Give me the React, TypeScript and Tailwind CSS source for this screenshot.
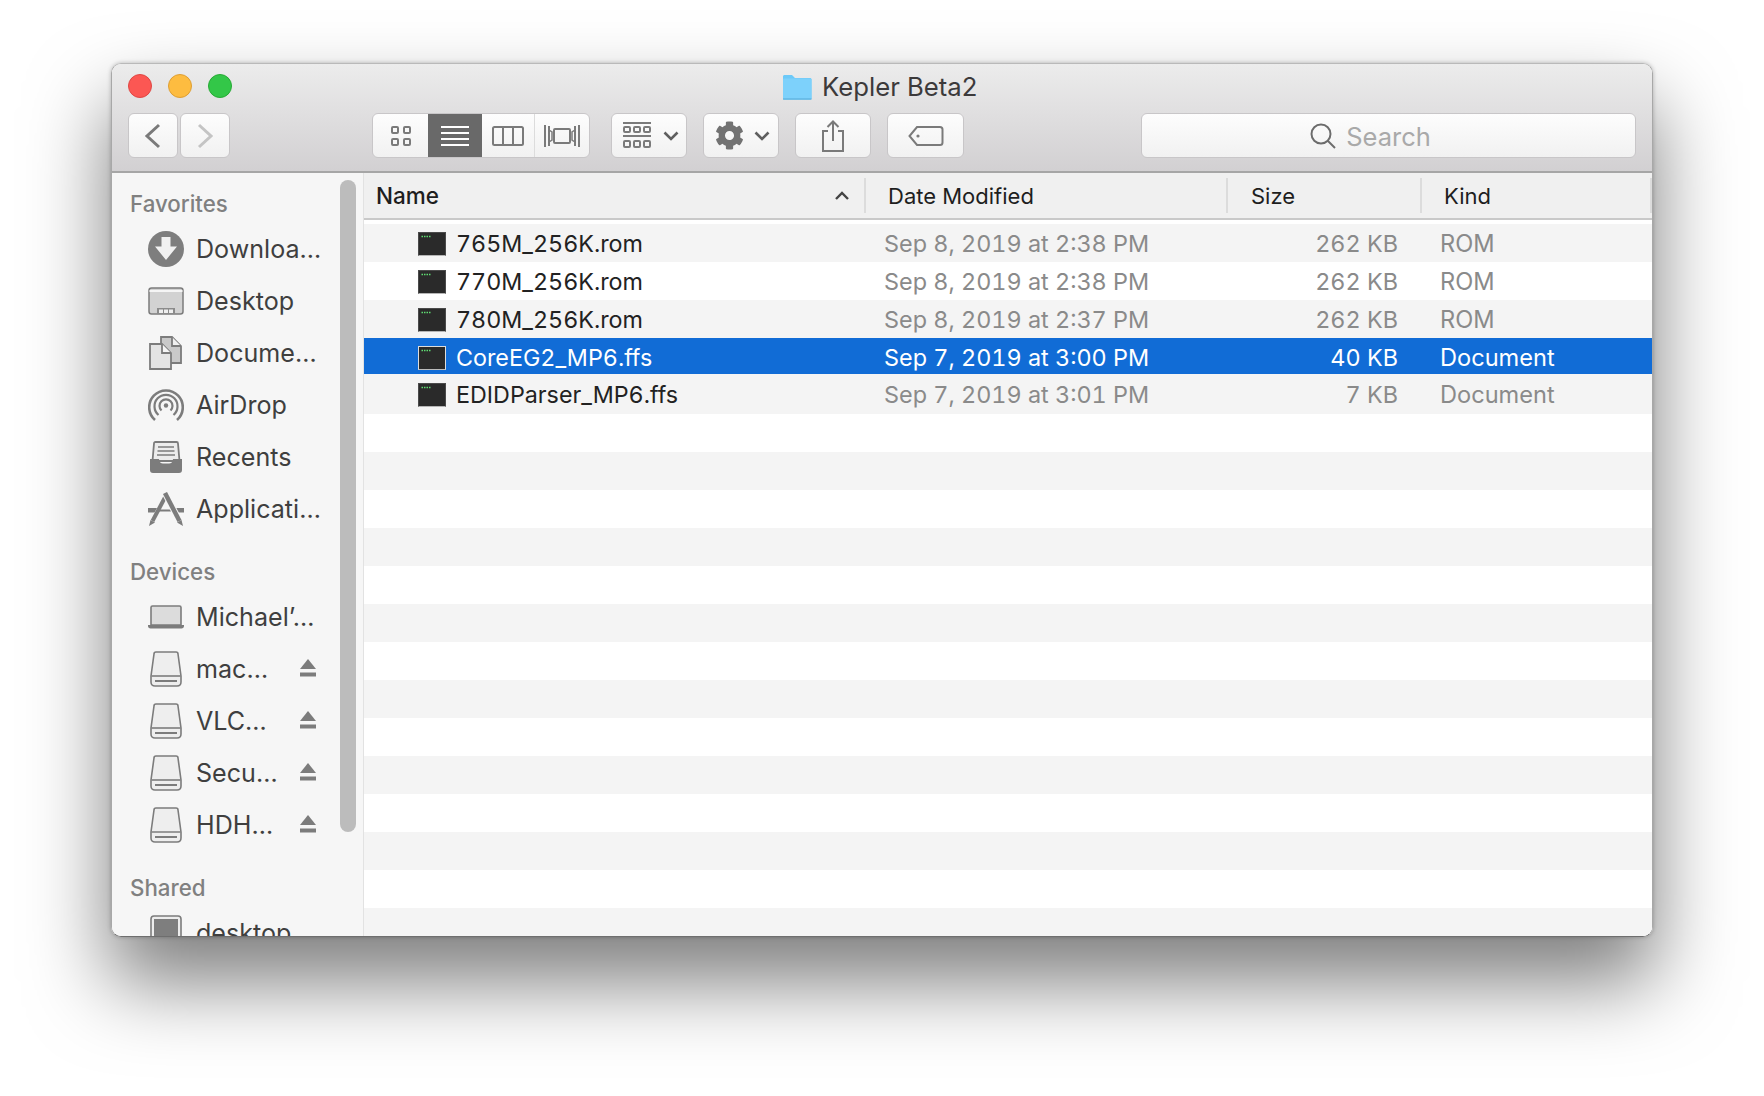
import { FaCog } from "react-icons/fa";

const IC = "#7c7c7c";

function Chevron({ dir, color }: { dir: "l" | "r"; color: string }) {
  return (
    <svg width="20" height="26" viewBox="0 0 20 26" fill="none">
      <path d={dir === "l" ? "M16 2 L4 13 L16 24" : "M4 2 L16 13 L4 24"} stroke={color} strokeWidth="3" />
    </svg>
  );
}

function SmallChevron() {
  return (
    <svg width="16" height="10" viewBox="0 0 16 10" fill="none">
      <path d="M1.5 1.5 L8 8 L14.5 1.5" stroke="#5f5f5f" strokeWidth="2.6" />
    </svg>
  );
}

function GridIcon() {
  return (
    <svg width="20" height="22" viewBox="0 0 20 22" fill="none" stroke="#7a7a7a" strokeWidth="2">
      <rect x="1" y="2" width="6" height="6" rx="1" />
      <rect x="13" y="2" width="6" height="6" rx="1" />
      <rect x="1" y="14" width="6" height="6" rx="1" />
      <rect x="13" y="14" width="6" height="6" rx="1" />
    </svg>
  );
}

function ListIcon() {
  return (
    <svg width="28" height="22" viewBox="0 0 28 22" fill="none" stroke="#fff" strokeWidth="2">
      <path d="M0 2H28M0 8H28M0 14H28M0 20H28" />
    </svg>
  );
}

function ColumnsIcon() {
  return (
    <svg width="32" height="20" viewBox="0 0 32 20" fill="none" stroke="#7a7a7a" strokeWidth="2">
      <rect x="1" y="1" width="30" height="18" rx="1.5" />
      <path d="M11 1V19M21 1V19" />
    </svg>
  );
}

function CoverIcon() {
  return (
    <svg width="36" height="22" viewBox="0 0 36 22" fill="none" stroke="#7a7a7a" strokeWidth="2">
      <path d="M1 0V22M5 1V21M35 0V22M31 1V21" />
      <rect x="10" y="4" width="16" height="14" rx="1" />
      <path d="M5 5L8 7V15L5 17M31 5L28 7V15L31 17" strokeWidth="1.5" />
    </svg>
  );
}

function GroupIcon() {
  return (
    <svg width="28" height="28" viewBox="0 0 28 28" fill="none" stroke="#7a7a7a" strokeWidth="2">
      <path d="M0 1H28M0 14H28" />
      <rect x="1" y="5" width="6" height="5" rx="1" />
      <rect x="11" y="5" width="6" height="5" rx="1" />
      <rect x="21" y="5" width="6" height="5" rx="1" />
      <rect x="1" y="19" width="6" height="6" rx="1" />
      <rect x="11" y="19" width="6" height="6" rx="1" />
      <rect x="21" y="19" width="6" height="6" rx="1" />
    </svg>
  );
}

function ShareIcon() {
  return (
    <svg width="24" height="32" viewBox="0 0 24 32" fill="none" stroke="#7a7a7a" strokeWidth="2">
      <path d="M7 11H2V31H22V11H17" />
      <path d="M12 21V2M6.5 7L12 1.5L17.5 7" />
    </svg>
  );
}

function TagIcon() {
  return (
    <svg width="36" height="22" viewBox="0 0 36 22" fill="none" stroke="#7a7a7a" strokeWidth="2">
      <path d="M9 2H32A2.5 2.5 0 0 1 34.500 4.500V17.500A2.500 2.500 0 0 1 32 20H9L1.500 11Z" />
      <circle cx="10" cy="11" r="1.600" fill="#7a7a7a" stroke="none" />
    </svg>
  );
}

function SearchIcon() {
  return (
    <svg width="26" height="26" viewBox="0 0 26 26" fill="none" stroke="#6c6c6c" strokeWidth="2">
      <circle cx="11" cy="11" r="9.500" />
      <path d="M17.500 17.500L25 25" />
    </svg>
  );
}

function FolderIcon() {
  return (
    <svg width="30" height="26" viewBox="0 0 30 26">
      <path d="M1 2.500C1 1.500 1.800 1 2.500 1H10L13 4H28C29 4 29.500 4.700 29.500 5.500V24C29.500 25 29 25.500 28 25.500H2.500C1.500 25.500 1 25 1 24Z" fill="#6cc9f8" />
      <rect x="1" y="4.500" width="28.500" height="21" rx="1" fill="#7dd1fb" />
      <rect x="1" y="24.500" width="28.500" height="1" fill="#54a9d8" />
    </svg>
  );
}

function Download() {
  return (
    <svg width="36" height="36" viewBox="0 0 36 36">
      <circle cx="18" cy="18" r="18" fill="#7e7e7e" />
      <path d="M13.500 6H22.500V15.500H29L18 29L7 15.500H13.500Z" fill="#f1f1f1" />
    </svg>
  );
}

function Desktop() {
  return (
    <svg width="36" height="28" viewBox="0 0 36 28">
      <rect x="1" y="1" width="34" height="26" rx="2.500" fill="#d2d2d2" stroke={IC} strokeWidth="1.500" />
      <rect x="1.500" y="3" width="33" height="2" fill="#f5f5f5" />
      <rect x="9" y="21" width="18" height="6" fill="#8b8b8b" />
      <rect x="11" y="22.500" width="4" height="3.500" fill="#efefef" />
      <rect x="16" y="22.500" width="4" height="3.500" fill="#efefef" />
      <rect x="21" y="22.500" width="4" height="3.500" fill="#efefef" />
    </svg>
  );
}

function Documents() {
  return (
    <svg width="34" height="34" viewBox="0 0 34 34" stroke={IC} strokeWidth="1.800">
      <path d="M12 1H23L32 10V27H12Z" fill="#c9c9c9" />
      <path d="M23 1V10H32" fill="#f0f0f0" />
      <path d="M1 8H13L22 17V33H1Z" fill="#e4e4e4" />
      <path d="M13 8V17H22" fill="#f5f5f5" />
    </svg>
  );
}

function AirDrop() {
  return (
    <svg width="36" height="34" viewBox="0 0 36 34" fill="none" stroke={IC} strokeWidth="2.200">
      <path d="M7 32A16.800 16.800 0 1 1 29 32" strokeWidth="2.600" />
      <path d="M10.500 27A11.500 11.500 0 1 1 25.500 27" />
      <path d="M13.500 22.500A6.500 6.500 0 1 1 22.500 22.500" />
      <circle cx="18" cy="17.500" r="2.200" fill={IC} stroke="none" />
    </svg>
  );
}

function Recents() {
  return (
    <svg width="32" height="32" viewBox="0 0 32 32">
      <path d="M4 2.500C4 1.500 4.500 1 5.500 1H26.500C27.500 1 28 1.500 28 2.500L29.500 20H2.500Z" fill="#ececec" stroke={IC} strokeWidth="1.800" />
      <path d="M8 6H24M7.500 10H24.500M7 14H25" stroke={IC} strokeWidth="1.500" />
      <path d="M0 18H9C9 21 11 22.500 13 22.500H19C21 22.500 23 21 23 18H32V29C32 31 31 32 29 32H3C1 32 0 31 0 29Z" fill={IC} />
    </svg>
  );
}

function Applications() {
  return (
    <svg width="36" height="34" viewBox="0 0 36 34" fill="none">
      <path d="M0 16H9L6.500 20.500H0ZM36 16H27L29.500 20.500H36Z" fill={IC} />
      <path d="M11 18.500H25" stroke={IC} strokeWidth="2" />
      <path d="M18 3.500L4.500 29" stroke={IC} strokeWidth="4" />
      <path d="M17 1L31.500 29" stroke="#f6f6f6" strokeWidth="6.500" />
      <path d="M17 1L31.500 29" stroke={IC} strokeWidth="4.500" />
      <path d="M2.500 28L1 34L7 30.500ZM33.500 28L35 34L29 30.500Z" fill={IC} />
    </svg>
  );
}

function Laptop() {
  return (
    <svg width="36" height="24" viewBox="0 0 36 24">
      <path d="M3 2.500C3 1.500 3.500 1 4.500 1H31.500C32.500 1 33 1.500 33 2.500V20H3Z" fill="#dcdcdc" stroke={IC} strokeWidth="1.600" />
      <path d="M0 20H36V21C36 22.500 35 23.500 33.500 23.500H2.500C1 23.500 0 22.500 0 21Z" fill={IC} />
    </svg>
  );
}

function Drive() {
  return (
    <svg width="32" height="36" viewBox="0 0 32 36">
      <path d="M4 3C4 1.800 4.800 1 6 1H26C27.200 1 28 1.800 28 3L31 25V31C31 33.500 29.500 35 27 35H5C2.500 35 1 33.500 1 31V25Z" fill="#eeeeee" stroke={IC} strokeWidth="1.600" />
      <path d="M1.500 25H30.500" stroke={IC} strokeWidth="1.600" />
      <path d="M5 30H27" stroke={IC} strokeWidth="2" />
    </svg>
  );
}

function Eject() {
  return (
    <svg width="16" height="18" viewBox="0 0 16 18">
      <path d="M8 0L16 10H0Z" fill={IC} />
      <rect x="0" y="13.500" width="16" height="4" fill={IC} />
    </svg>
  );
}

function SharedIcon() {
  return (
    <svg width="32" height="36" viewBox="0 0 32 36">
      <rect x="1" y="1" width="30" height="34" rx="3" fill="#ededed" stroke={IC} strokeWidth="1.600" />
      <rect x="4" y="4" width="24" height="30" fill="#7e7e7e" />
    </svg>
  );
}

function TerminalIcon({ selected }: { selected?: boolean }) {
  return (
    <svg width="28" height="24" viewBox="0 0 28 24" className="shrink-0">
      <rect x="0.500" y="0.500" width="27" height="23" fill="#2a2a2a" stroke={selected ? "#dddddd" : "#4a4a4a"} />
      <rect x="0.500" y="23" width="27" height="1" fill={selected ? "#bbbbbb" : "#b5b5b5"} />
      <path d="M3.500 4.500H5M6 4.500H7.500M8.500 4.500H10M11 4.500H12.500" stroke="#5fdc72" strokeWidth="1.500" />
    </svg>
  );
}

function ToolButton({ className, children }: { className: string; children: React.ReactNode }) {
  return (
    <div className={`h-[45px] flex items-center justify-center rounded-[6px] border border-[#c8c6c8] bg-gradient-to-b from-[#fdfdfd] to-[#f1f1f1] ${className}`}>
      {children}
    </div>
  );
}

function SideHeader({ children, className }: { children: React.ReactNode; className?: string }) {
  return (
    <div className={`h-[38px] flex items-center pl-[18px] text-[22.300px] font-medium text-[#808080] ${className ?? ""}`}>
      {children}
    </div>
  );
}

function SideRow({ icon, label, eject }: { icon: React.ReactNode; label: string; eject?: boolean }) {
  return (
    <div className="h-[52px] flex items-center pl-[36px] text-[#3f3f3f] text-[25.100px]">
      <div className="w-[36px] h-[36px] flex items-center justify-center shrink-0">{icon}</div>
      <span className="ml-[12px] mt-[2px] whitespace-nowrap">{label}</span>
      {eject && (
        <div className="ml-auto mr-[47px] mb-[2px] shrink-0 flex items-center">
          <Eject />
        </div>
      )}
    </div>
  );
}

const files = [
  { n: "765M_256K.rom", d: "Sep 8, 2019 at 2:38 PM", s: "262 KB", k: "ROM", h: "h-[38px]", bg: "bg-[#f4f4f4]" },
  { n: "770M_256K.rom", d: "Sep 8, 2019 at 2:38 PM", s: "262 KB", k: "ROM", h: "h-[38px]", bg: "bg-white" },
  { n: "780M_256K.rom", d: "Sep 8, 2019 at 2:37 PM", s: "262 KB", k: "ROM", h: "h-[38px]", bg: "bg-[#f4f4f4]" },
  { n: "CoreEG2_MP6.ffs", d: "Sep 7, 2019 at 3:00 PM", s: "40 KB", k: "Document", h: "h-[36px] pt-[4px]", bg: "bg-[#116cd6]", sel: true },
  { n: "EDIDParser_MP6.ffs", d: "Sep 7, 2019 at 3:01 PM", s: "7 KB", k: "Document", h: "h-[40px] pt-[2px]", bg: "bg-[#f4f4f4]" },
];

const emptyRows = Array.from({ length: 14 }, (_, i) => i);

export default function App() {
  return (
    <div className="w-[1764px] h-[1096px] bg-white overflow-hidden pt-[63px] pl-[111px] font-['Inter','Liberation_Sans',sans-serif]">
      <div className="w-[1542px] h-[874px] rounded-[10px] overflow-hidden shadow-[0_44px_80px_2px_rgba(0,0,0,0.5),0_0_4px_rgba(0,0,0,0.25)] flex flex-col border border-[#b9b9b9] border-b-[#6e6e6e] border-x-[#a8a8a8]">
        {/* Title bar */}
        <div className="h-[109px] shrink-0 flex flex-col bg-gradient-to-b from-[#ececec] to-[#d2d0d2] border-b-2 border-[#a6a6a6] px-[16px]">
          <div className="h-[49px] shrink-0 flex items-center relative">
            <div className="flex gap-[16px] -mt-[5px]">
              <div className="w-[24px] h-[24px] rounded-full bg-[#fc5753] border border-[#df4744]" />
              <div className="w-[24px] h-[24px] rounded-full bg-[#fdbc40] border border-[#de9f34]" />
              <div className="w-[24px] h-[24px] rounded-full bg-[#33c748] border border-[#27aa35]" />
            </div>
            <div className="absolute left-[654px] top-[8px] flex items-center gap-[10px] text-[25.700px] text-[#3c3a3b] leading-[30px]">
              <FolderIcon />
              <span>Kepler Beta2</span>
            </div>
          </div>
          <div className="flex items-start">
            <ToolButton className="w-[50px]"><Chevron dir="l" color="#7a7a7a" /></ToolButton>
            <ToolButton className="w-[50px] ml-[2px]"><Chevron dir="r" color="#c4c4c4" /></ToolButton>

            <div className="ml-[142px] w-[218px] h-[45px] flex rounded-[6px] border border-[#c8c6c8] bg-gradient-to-b from-[#fdfdfd] to-[#f1f1f1] overflow-hidden">
              <div className="w-[55px] flex items-center justify-center"><GridIcon /></div>
              <div className="w-[54px] flex items-center justify-center bg-[#696969]"><ListIcon /></div>
              <div className="w-[53px] flex items-center justify-center border-r border-[#dcdcdc]"><ColumnsIcon /></div>
              <div className="flex-1 flex items-center justify-center"><CoverIcon /></div>
            </div>

            <ToolButton className="w-[76px] ml-[21px] gap-[12px] pl-[4px]"><GroupIcon /><SmallChevron /></ToolButton>
            <ToolButton className="w-[76px] ml-[16px] gap-[10px] pl-[3px]">
              <FaCog className="text-[29px] text-[#727272]" />
              <SmallChevron />
            </ToolButton>
            <ToolButton className="w-[76px] ml-[16px]"><ShareIcon /></ToolButton>
            <ToolButton className="w-[77px] ml-[16px]"><TagIcon /></ToolButton>
            <ToolButton className="w-[495px] ml-[177px] gap-[10px] pr-[36px]">
              <SearchIcon />
              <span className="text-[25.500px] text-[#a9a9a9] mt-[3px]">Search</span>
            </ToolButton>
          </div>
        </div>

        {/* Body */}
        <div className="flex-1 flex min-h-0">
          {/* Sidebar */}
          <div className="w-[252px] shrink-0 bg-[#f6f6f6] border-r border-[#e2e2e2] pt-[12px] relative overflow-hidden">
            <SideHeader>Favorites</SideHeader>
            <SideRow icon={<Download />} label="Downloa…" />
            <SideRow icon={<Desktop />} label="Desktop" />
            <SideRow icon={<Documents />} label="Docume…" />
            <SideRow icon={<AirDrop />} label="AirDrop" />
            <SideRow icon={<Recents />} label="Recents" />
            <SideRow icon={<Applications />} label="Applicati…" />
            <SideHeader className="mt-[18px]">Devices</SideHeader>
            <SideRow icon={<Laptop />} label="Michael’…" />
            <SideRow icon={<Drive />} label="mac…" eject />
            <SideRow icon={<Drive />} label="VLC…" eject />
            <SideRow icon={<Drive />} label="Secu…" eject />
            <SideRow icon={<Drive />} label="HDH…" eject />
            <SideHeader className="mt-[18px]">Shared</SideHeader>
            <SideRow icon={<SharedIcon />} label="desktop" />
            <div className="absolute left-[228px] top-[7px] w-[16px] h-[652px] rounded-full bg-[#bcbcbc]" />
          </div>

          {/* File list */}
          <div className="flex-1 flex flex-col bg-white min-w-0 overflow-hidden">
            <div className="h-[47px] shrink-0 flex bg-[#f0f0f0] border-b-2 border-[#c9c9c9] text-[22px] text-[#1e1e1e] py-[5px] mb-[4px]">
              <div className="w-[502px] flex items-center pl-[12px] pr-[15px] justify-between border-r-2 border-[#dcdcdc]">
                <span className="font-medium text-[22.500px]">Name</span>
                <svg width="14" height="9" viewBox="0 0 14 9" fill="none">
                  <path d="M1 8L7 2L13 8" stroke="#444" strokeWidth="2.400" />
                </svg>
              </div>
              <div className="w-[362px] flex items-center pl-[22px] pt-[2px] border-r-2 border-[#dcdcdc]">Date Modified</div>
              <div className="w-[194px] flex items-center pl-[23px] pt-[2px] border-r-2 border-[#dcdcdc]">Size</div>
              <div className="flex-1 flex items-center pl-[22px] pt-[2px] border-r-2 border-[#dcdcdc]">Kind</div>
            </div>

            {files.map((f) => (
              <div
                key={f.n}
                className={`${f.h} ${f.bg} shrink-0 flex items-center pt-[2px] text-[23.400px] tabular-nums ${f.sel ? "text-white" : "text-[#8a8a8a]"}`}
              >
                <div className={`w-[502px] flex items-center pl-[54px] gap-[10px] text-[23.300px] ${f.sel ? "" : "text-[#222222]"}`}>
                  <TerminalIcon selected={f.sel} />
                  <span className="whitespace-nowrap">{f.n}</span>
                </div>
                <div className="w-[362px] pl-[18px] whitespace-nowrap">{f.d}</div>
                <div className="w-[170px] text-right whitespace-nowrap">{f.s}</div>
                <div className="pl-[42px] text-[23.600px] whitespace-nowrap">{f.k}</div>
              </div>
            ))}

            {emptyRows.map((i) => (
              <div key={i} className={`h-[38px] shrink-0 ${i % 2 === 0 ? "bg-white" : "bg-[#f4f4f4]"}`} />
            ))}
          </div>
        </div>
      </div>
    </div>
  );
}
